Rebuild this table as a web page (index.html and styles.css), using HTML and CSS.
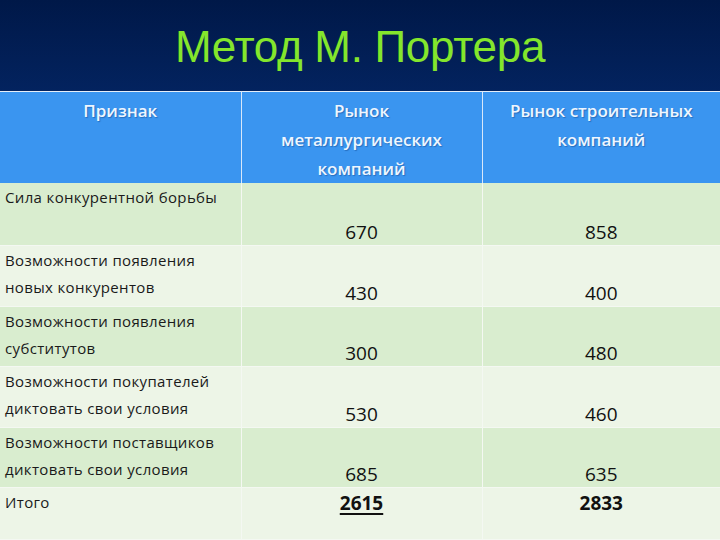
FILE: index.html
```html
<!DOCTYPE html>
<html lang="ru">
<head>
<meta charset="utf-8">
<title>Метод М. Портера</title>
<link rel="stylesheet" href="styles.css">
</head>
<body>
<div class="slide">
  <h1 class="title">Метод М. Портера</h1>
  <table class="grid">
    <colgroup>
      <col class="c1"><col class="c2"><col class="c3">
    </colgroup>
    <thead>
      <tr class="head">
        <th>Признак</th>
        <th>Рынок<br>металлургических<br>компаний</th>
        <th>Рынок строительных<br>компаний</th>
      </tr>
    </thead>
    <tbody>
      <tr class="dark r1">
        <td class="label">Сила конкурентной борьбы</td>
        <td class="num">670</td>
        <td class="num">858</td>
      </tr>
      <tr class="light r2">
        <td class="label">Возможности появления<br>новых конкурентов</td>
        <td class="num">430</td>
        <td class="num">400</td>
      </tr>
      <tr class="dark r3">
        <td class="label">Возможности появления<br>субститутов</td>
        <td class="num">300</td>
        <td class="num">480</td>
      </tr>
      <tr class="light r4">
        <td class="label">Возможности покупателей<br>диктовать свои условия</td>
        <td class="num">530</td>
        <td class="num">460</td>
      </tr>
      <tr class="dark r5">
        <td class="label">Возможности поставщиков<br>диктовать свои условия</td>
        <td class="num">685</td>
        <td class="num">635</td>
      </tr>
      <tr class="light r6">
        <td class="label">Итого</td>
        <td class="num total"><u>2615</u></td>
        <td class="num total">2833</td>
      </tr>
    </tbody>
  </table>
</div>
</body>
</html>
```

FILE: styles.css
```css
html, body {
  margin: 0;
  padding: 0;
}
body {
  width: 720px;
  height: 540px;
  overflow: hidden;
  background: #001a4c;
}
.slide {
  width: 720px;
  height: 540px;
  overflow: hidden;
  background: linear-gradient(#001848 0%, #03235f 17%, #03235f 100%);
  display: flex;
  flex-direction: column;
}
.title {
  flex-shrink: 0;
  margin: 0;
  height: 91px;
  box-sizing: border-box;
  padding-top: 22px;
  text-align: center;
  font-family: "Liberation Sans", Arial, sans-serif;
  font-weight: normal;
  font-size: 44px;
  line-height: 50px;
  color: #84e62c;
  letter-spacing: -0.3px;
}
.grid {
  flex-shrink: 0;
  width: 720px;
  border-collapse: collapse;
  table-layout: fixed;
  border-top: 1px solid #e6eef8;
}
.c1 { width: 241px; }
.c2 { width: 241px; }
.c3 { width: 238px; }
.grid th, .grid td {
  border-left: 1px solid #f4f8f2;
  border-bottom: 1px solid #f4f8f2;
  padding: 0;
}
.grid th:first-child, .grid td:first-child {
  border-left: none;
}
.head {
  height: 89px;
  background: #3a95f0;
}
.head th {
  vertical-align: top;
  padding-top: 4px;
  height: 85px;
  font-family: "Open Sans", "Liberation Sans", sans-serif;
  font-weight: 600;
  font-size: 17px;
  line-height: 29px;
  color: #eef6ff;
  text-shadow: 1px 1px 1px rgba(0, 40, 100, 0.35);
  border-left: 1px solid #d8e8fa;
  border-bottom: none;
}
.head th:first-child { border-left: none; }
.dark { background: #d9edcf; }
.light { background: #edf5e7; }
.r1 { height: 62px; }
.r2 { height: 61px; }
.r3 { height: 60px; }
.r4 { height: 61px; }
.r5 { height: 60px; }
.r6 { height: 52px; }
.label {
  vertical-align: top;
  padding: 1px 4px 0 5px !important;
  font-family: "Open Sans", "Liberation Sans", sans-serif;
  font-size: 15px;
  line-height: 27px;
  color: #1a1a1a;
  letter-spacing: 0.35px;
}
.num {
  vertical-align: bottom;
  text-align: center;
  padding-bottom: 1px !important;
  font-family: "Open Sans", "Liberation Sans", sans-serif;
  font-size: 19px;
  line-height: 24px;
  color: #111;
}
.total {
  vertical-align: top;
  padding-top: 3px !important;
  font-weight: bold;
}
.total u {
  text-decoration-thickness: 2px;
  text-underline-offset: 3px;
}
```
